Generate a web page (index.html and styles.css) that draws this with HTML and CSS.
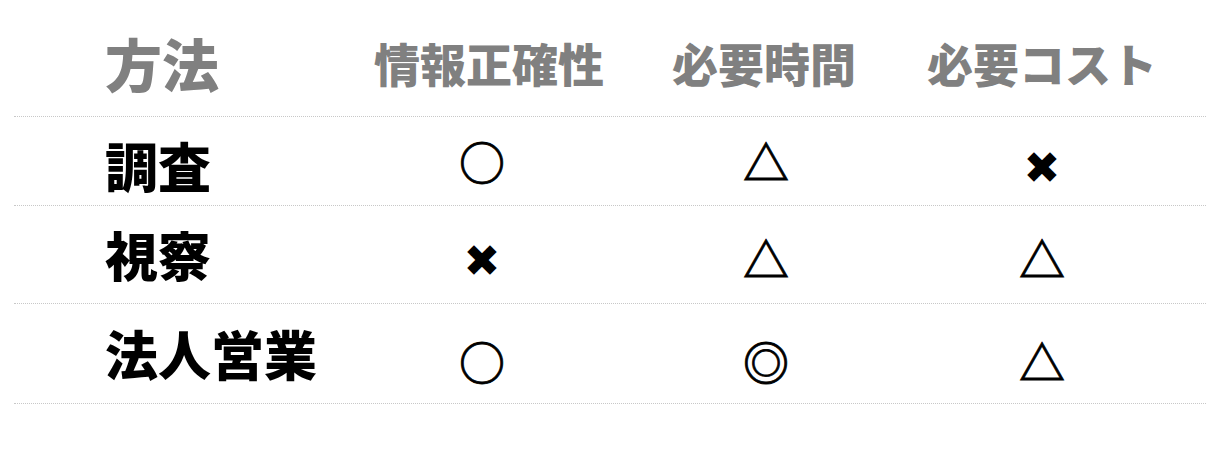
FILE: index.html
```html
<!DOCTYPE html>
<html lang="ja">
<head>
<meta charset="utf-8">
<link rel="stylesheet" href="styles.css">
</head>
<body>
<div class="table">
  <div class="row head">
    <div class="cell name">方法</div>
    <div class="cell">情報正確性</div>
    <div class="cell">必要時間</div>
    <div class="cell">必要コスト</div>
  </div>
  <div class="row r1">
    <div class="cell name">調査</div>
    <div class="cell"><span class="sym">○</span></div>
    <div class="cell"><span class="sym">△</span></div>
    <div class="cell"><span class="x">✖</span></div>
  </div>
  <div class="row r2">
    <div class="cell name">視察</div>
    <div class="cell"><span class="x">✖</span></div>
    <div class="cell"><span class="sym">△</span></div>
    <div class="cell"><span class="sym">△</span></div>
  </div>
  <div class="row r3">
    <div class="cell name">法人営業</div>
    <div class="cell"><span class="sym">○</span></div>
    <div class="cell"><span class="sym">◎</span></div>
    <div class="cell"><span class="sym">△</span></div>
  </div>
</div>
</body>
</html>
```
FILE: styles.css
```css
html, body {
  margin: 0;
  padding: 0;
  background: #ffffff;
}
body {
  font-family: "Noto Sans CJK JP", "Noto Sans", sans-serif;
  width: 1232px;
  height: 460px;
  overflow: hidden;
}
.table {
  margin-left: 14px;
  width: 1192px;
}
.row {
  display: grid;
  grid-template-columns: 336px 278px 272px 284px 22px;
  align-items: center;
  border-bottom: 1px dotted #c8c8c8;
  box-sizing: border-box;
}
.cell {
  text-align: center;
  line-height: 1;
  white-space: nowrap;
}
.cell.name {
  text-align: left;
  padding-left: 91px;
}
.row:not(.head) .cell:nth-child(2) {
  padding-right: 14px;
}
.row:not(.head) .cell:nth-child(3) {
  padding-left: 4px;
}
.head {
  height: 109px;
  margin-top: 8px;
  color: #808080;
  font-weight: 900;
  font-size: 46px;
}
.head .cell.name {
  font-size: 57px;
}
.r1, .r2, .r3 {
  font-weight: 900;
  font-size: 53px;
  color: #000;
}
.r1 {
  height: 89px;
  padding-top: 8px;
}
.r2 {
  height: 98px;
}
.r3 {
  height: 100px;
}
.sym {
  font-weight: 700;
  font-size: 46px;
  display: inline-block;
  -webkit-text-stroke: 0.8px #000;
}
.x {
  font-family: "DejaVu Sans", sans-serif;
  font-weight: 400;
  font-size: 44px;
  display: inline-block;
}
.r1 .sym {
  margin-bottom: 16px;
}
.r1 .x {
  margin-bottom: 6px;
}
.r2 .sym {
  margin-bottom: 0;
}
.r2 .x {
  margin-top: 10px;
}
.r3 .sym {
  margin-top: 14px;
}
```
